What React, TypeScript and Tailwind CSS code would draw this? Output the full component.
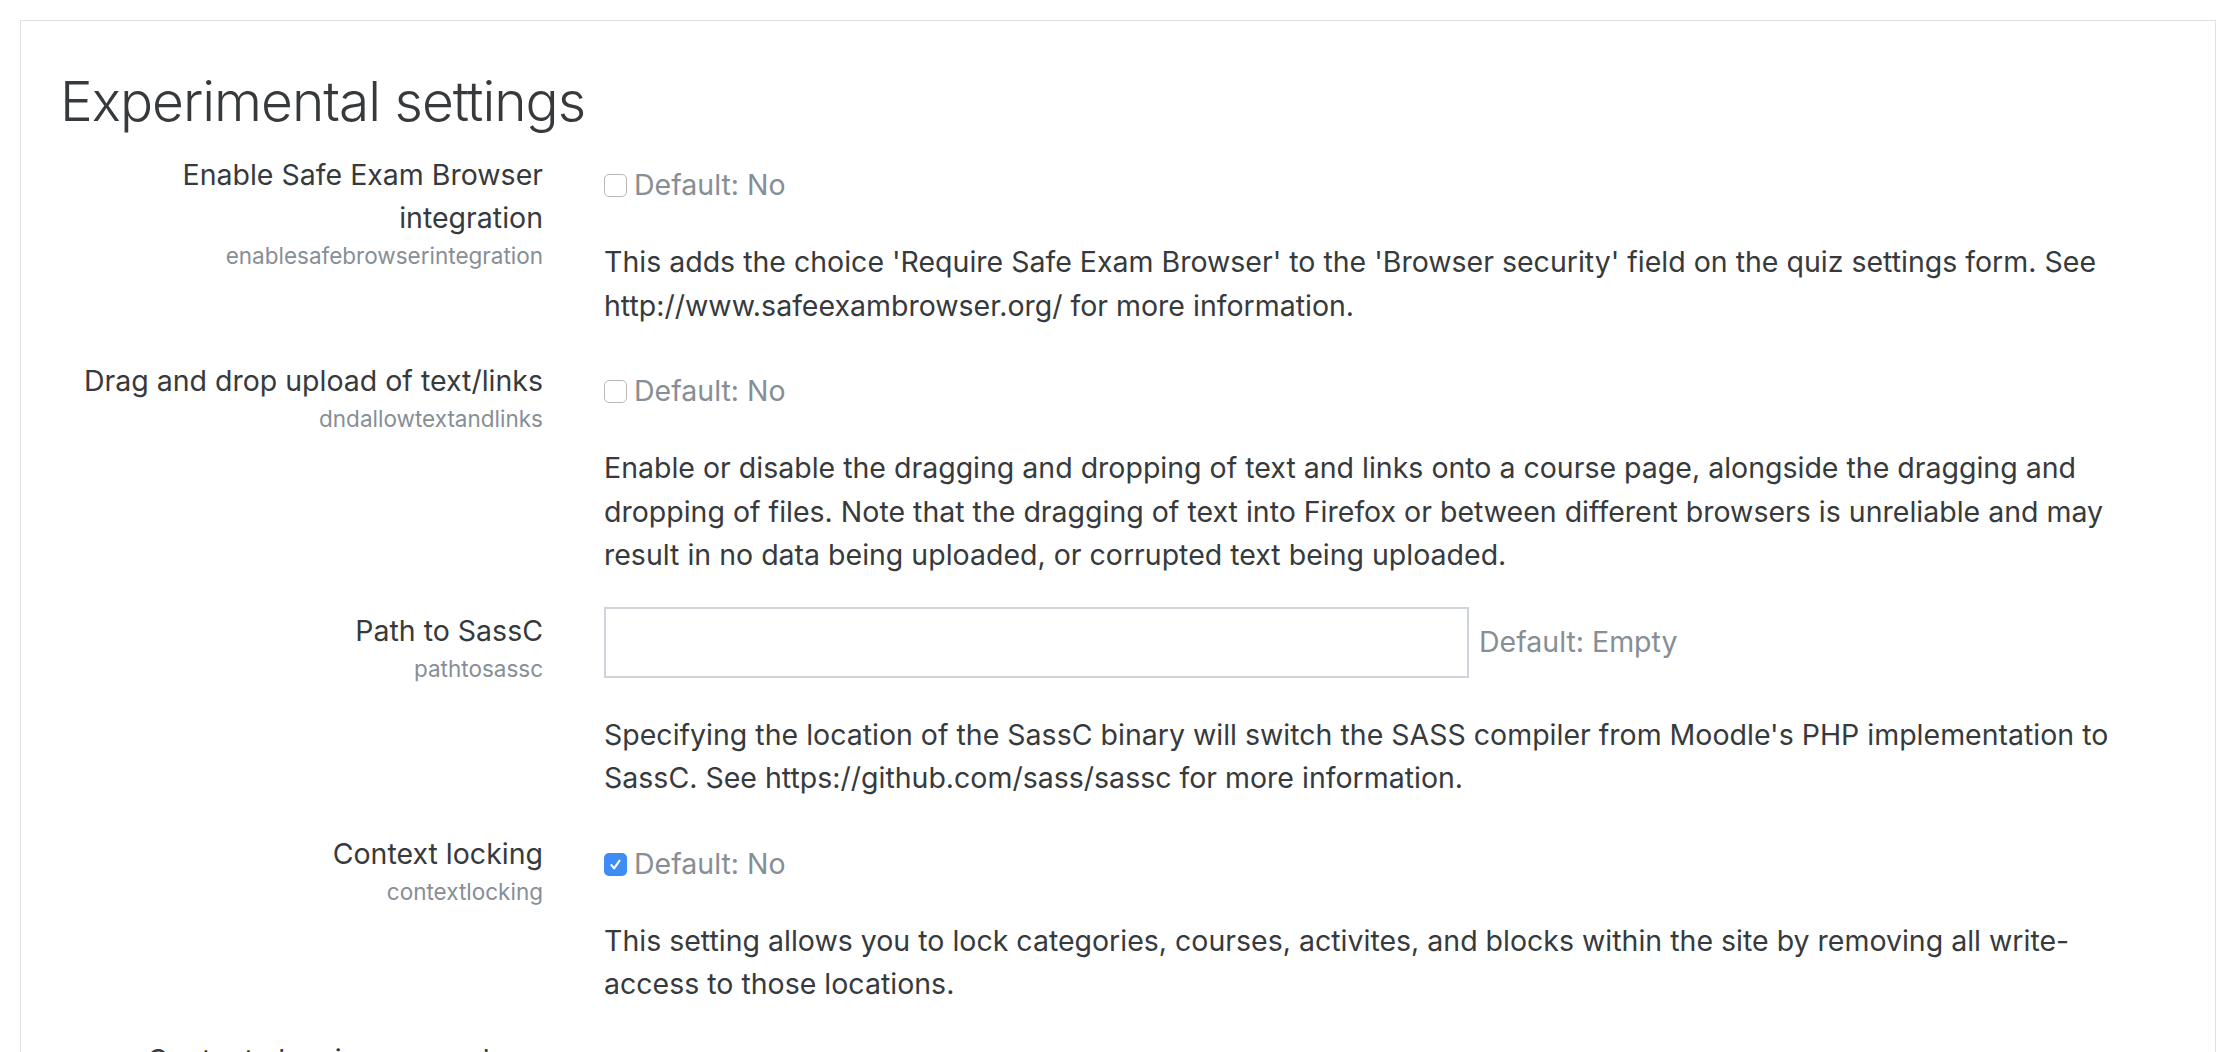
import React from "react";

// One admin setting row: label column on the left, control + description on the right
interface Setting {
  label: string[];
  name: string;
  kind: "checkbox" | "text";
  checked?: boolean;
  defaultText: string;
  description: string;
}

const settings: Setting[] = [
  {
    label: ["Enable Safe Exam Browser", "integration"],
    name: "enablesafebrowserintegration",
    kind: "checkbox",
    defaultText: "Default: No",
    description:
      "This adds the choice 'Require Safe Exam Browser' to the 'Browser security' field on the quiz settings form. See http://www.safeexambrowser.org/ for more information.",
  },
  {
    label: ["Drag and drop upload of text/links"],
    name: "dndallowtextandlinks",
    kind: "checkbox",
    defaultText: "Default: No",
    description:
      "Enable or disable the dragging and dropping of text and links onto a course page, alongside the dragging and dropping of files. Note that the dragging of text into Firefox or between different browsers is unreliable and may result in no data being uploaded, or corrupted text being uploaded.",
  },
  {
    label: ["Path to SassC"],
    name: "pathtosassc",
    kind: "text",
    defaultText: "Default: Empty",
    description:
      "Specifying the location of the SassC binary will switch the SASS compiler from Moodle's PHP implementation to SassC. See https://github.com/sass/sassc for more information.",
  },
  {
    label: ["Context locking"],
    name: "contextlocking",
    kind: "checkbox",
    checked: true,
    defaultText: "Default: No",
    description:
      "This setting allows you to lock categories, courses, activites, and blocks within the site by removing all write-access to those locations.",
  },
  {
    label: ["Content cleaning everywhere"],
    name: "forceclean",
    kind: "checkbox",
    defaultText: "Default: No",
    description:
      "If enabled, all user-generated content will be cleaned before it is displayed, regardless of where it was entered.",
  },
];

function Checkbox({ checked }: { checked?: boolean }) {
  if (checked) {
    return (
      <span className="flex h-[23px] w-[23px] shrink-0 items-center justify-center rounded-[5px] bg-[#3f8cf4]">
        <svg viewBox="0 0 16 16" className="h-[17px] w-[17px]" fill="none">
          <path d="M4.2 8.6l2.5 3L11.8 4.4" stroke="white" strokeWidth={2} strokeLinecap="round" strokeLinejoin="round" />
        </svg>
      </span>
    );
  }
  return <span className="block h-[23px] w-[23px] shrink-0 rounded-[5px] border border-[#b9b9b9] bg-white" />;
}

function SettingRow({ s }: { s: Setting }) {
  const isText = s.kind === "text";
  return (
    <div className="mb-[32px] flex">
      {/* Label column */}
      <div className="w-[483px] shrink-0 text-right">
        {s.label.map((line) => (
          <div key={line} className="text-[28.5px] leading-[43px] text-[#373a3c]">
            {line}
          </div>
        ))}
        <div className="text-[22.5px] leading-[34px] text-[#868e96]">{s.name}</div>
      </div>

      {/* Control + description */}
      <div className={`ml-[61px] w-[1546px] shrink-0 ${isText ? "-mt-[2px]" : ""}`}>
        {isText ? (
          <div className="flex items-center">
            <div className="h-[71px] w-[865px] border-2 border-[#ced4da] bg-white" />
            <span className="ml-[10px] text-[28.5px] text-[#868e96]">{s.defaultText}</span>
          </div>
        ) : (
          <div className="mt-[11px] flex h-[43px] items-center">
            <Checkbox checked={s.checked} />
            <span className="ml-[7px] text-[28.5px] text-[#868e96]">{s.defaultText}</span>
          </div>
        )}
        <p className={`${isText ? "mt-[35px]" : "mt-[33px]"} text-[28.5px] leading-[43.5px] text-[#373a3c]`}>
          {s.description}
        </p>
      </div>
    </div>
  );
}

export default function App() {
  return (
    <div
      className="min-h-screen bg-white pl-[20px] pt-[20px]"
      style={{ fontFamily: "Inter, 'Noto Sans', sans-serif" }}
    >
      <div className="w-[2196px] border border-[#e1e1e1] pl-[39px] pt-[46px]">
        <h2 className="mb-[18px] text-[55px] font-light leading-[68px] tracking-[-1px] text-[#373a3c]">
          Experimental settings
        </h2>
        {settings.map((s) => (
          <SettingRow key={s.name} s={s} />
        ))}
      </div>
    </div>
  );
}
